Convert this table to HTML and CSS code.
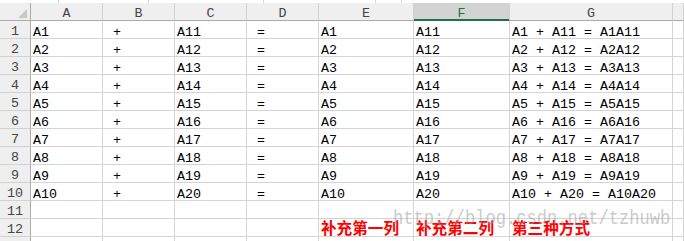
FILE: index.html
```html
<!DOCTYPE html>
<html lang="zh-CN">
<head>
<meta charset="utf-8">
<title>Sheet</title>
<link rel="stylesheet" href="styles.css">
</head>
<body>
<div class="strip">
  <span class="seg s1"></span><span class="seg s2"></span><span class="seg s3"></span><span class="seg s4"></span><span class="seg s5"></span><span class="seg s6"></span>
</div>
<div class="sheet">
  <div class="hd corner"><svg width="9" height="9" viewBox="0 0 9 9"><polygon points="9,0 9,9 0,9" fill="#c8c8c8"/></svg></div>
  <div class="hd col">A</div><div class="hd col">B</div><div class="hd col">C</div><div class="hd col">D</div><div class="hd col">E</div><div class="hd col sel">F</div><div class="hd col">G</div><div class="hd col"></div>

  <div class="hd rn">1</div><div class="c">A1</div><div class="c"> +</div><div class="c">A11</div><div class="c"> =</div><div class="c">A1</div><div class="c">A11</div><div class="c">A1 + A11 = A1A11</div><div class="c"></div>
  <div class="hd rn">2</div><div class="c">A2</div><div class="c"> +</div><div class="c">A12</div><div class="c"> =</div><div class="c">A2</div><div class="c">A12</div><div class="c">A2 + A12 = A2A12</div><div class="c"></div>
  <div class="hd rn">3</div><div class="c">A3</div><div class="c"> +</div><div class="c">A13</div><div class="c"> =</div><div class="c">A3</div><div class="c">A13</div><div class="c">A3 + A13 = A3A13</div><div class="c"></div>
  <div class="hd rn">4</div><div class="c">A4</div><div class="c"> +</div><div class="c">A14</div><div class="c"> =</div><div class="c">A4</div><div class="c">A14</div><div class="c">A4 + A14 = A4A14</div><div class="c"></div>
  <div class="hd rn">5</div><div class="c">A5</div><div class="c"> +</div><div class="c">A15</div><div class="c"> =</div><div class="c">A5</div><div class="c">A15</div><div class="c">A5 + A15 = A5A15</div><div class="c"></div>
  <div class="hd rn">6</div><div class="c">A6</div><div class="c"> +</div><div class="c">A16</div><div class="c"> =</div><div class="c">A6</div><div class="c">A16</div><div class="c">A6 + A16 = A6A16</div><div class="c"></div>
  <div class="hd rn">7</div><div class="c">A7</div><div class="c"> +</div><div class="c">A17</div><div class="c"> =</div><div class="c">A7</div><div class="c">A17</div><div class="c">A7 + A17 = A7A17</div><div class="c"></div>
  <div class="hd rn">8</div><div class="c">A8</div><div class="c"> +</div><div class="c">A18</div><div class="c"> =</div><div class="c">A8</div><div class="c">A18</div><div class="c">A8 + A18 = A8A18</div><div class="c"></div>
  <div class="hd rn">9</div><div class="c">A9</div><div class="c"> +</div><div class="c">A19</div><div class="c"> =</div><div class="c">A9</div><div class="c">A19</div><div class="c">A9 + A19 = A9A19</div><div class="c"></div>
  <div class="hd rn">10</div><div class="c">A10</div><div class="c"> +</div><div class="c">A20</div><div class="c"> =</div><div class="c">A10</div><div class="c">A20</div><div class="c">A10 + A20 = A10A20</div><div class="c"></div>
  <div class="hd rn">11</div><div class="c"></div><div class="c"></div><div class="c"></div><div class="c"></div><div class="c"></div><div class="c"></div><div class="c"></div><div class="c"></div>
  <div class="hd rn">12</div><div class="c"></div><div class="c"></div><div class="c"></div><div class="c"></div><div class="c note">补充第一列</div><div class="c note">补充第二列</div><div class="c note">第三种方式</div><div class="c"></div>
  <div class="hd rn"></div><div class="c"></div><div class="c"></div><div class="c"></div><div class="c"></div><div class="c"></div><div class="c"></div><div class="c"></div><div class="c"></div>
</div>
<div class="watermark">http://blog.csdn.net/tzhuwb</div>
</body>
</html>
```

FILE: styles.css
```css
html, body {
  margin: 0;
  padding: 0;
  width: 684px;
  height: 241px;
  overflow: hidden;
  background: #ffffff;
  position: relative;
}

.strip {
  height: 3px;
  display: flex;
  background: #ffffff;
}
.seg {
  display: block;
  height: 3px;
  border-right: 1px solid #d6d6d6;
  box-sizing: border-box;
}
.s1 { width: 59px; }
.s2 { width: 90px; }
.s3 { width: 115px; }
.s4 { width: 112px; }
.s5 { width: 26px; }
.s6 { width: 282px; border-right: none; }

.sheet {
  display: grid;
  grid-template-columns: 31px 72px 72px 72px 72px 95px 96px 163px 11px;
  grid-template-rows: 18px;
  grid-auto-rows: 18px;
  font-family: "Liberation Mono", "Noto Sans CJK SC", monospace;
  font-size: 13.33px;
  color: #000;
}

.sheet > div {
  box-sizing: border-box;
  border-right: 1px solid #d4d4d4;
  border-bottom: 1px solid #d4d4d4;
  white-space: pre;
  overflow: hidden;
  line-height: 17px;
}

.hd {
  background: #efefef;
  color: #444444;
}
.col {
  text-align: center;
  padding-top: 2px;
  border-bottom-color: #ababab !important;
  border-right-color: #d2d2d2 !important;
}
.col.sel {
  background: #d3d3d3;
  color: #217346;
  box-shadow: inset 0 -1px 0 #217346;
  border-bottom-color: #217346 !important;
}
.corner {
  display: flex;
  justify-content: flex-end;
  align-items: flex-end;
  padding: 0 3px 2px 0;
  border-bottom-color: #ababab !important;
  border-right-color: #ababab !important;
}
.corner svg { display: block; }

.rn {
  text-align: center;
  padding-top: 2px;
  border-right-color: #ababab !important;
  border-bottom-color: #d2d2d2 !important;
}

.c {
  padding: 3px 0 0 2px;
}

.note {
  font-family: "Noto Sans CJK SC", sans-serif;
  font-weight: bold;
  font-size: 15.6px;
  color: #ff0000;
  padding-top: 0 !important;
  line-height: 16px !important;
  overflow: visible !important;
}

.watermark {
  position: absolute;
  left: 393px;
  top: 207px;
  font-family: "Liberation Mono", monospace;
  font-size: 21px;
  line-height: 24px;
  color: rgba(150, 150, 150, 0.5);
  transform: scaleX(0.815);
  transform-origin: 0 0;
  white-space: nowrap;
  pointer-events: none;
}
```
